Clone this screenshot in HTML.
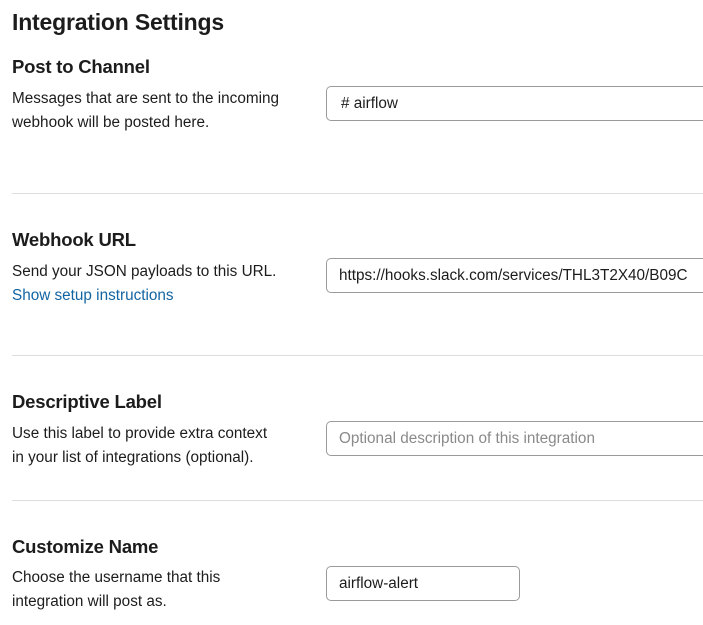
<!DOCTYPE html>
<html><head><meta charset="utf-8"><style>
*{margin:0;padding:0;box-sizing:border-box}
body{width:703px;height:625px;overflow:hidden;background:#fff;font-family:"Liberation Sans",sans-serif;color:#1d1c1d;position:relative}
h1{position:absolute;left:12px;top:9px;font-size:23px;font-weight:bold;letter-spacing:-0.2px}
h2{position:absolute;left:12px;font-size:18.5px;font-weight:bold;letter-spacing:-0.2px}
.d{position:absolute;left:12px;font-size:15.3px;line-height:24px;color:#1d1c1d;white-space:nowrap}
.in{position:absolute;left:326px;height:35px;border:1px solid #9a9a9b;border-radius:5px;border-right:none;border-top-right-radius:0;border-bottom-right-radius:0;font-size:15.3px;line-height:34px;padding-left:12px;white-space:nowrap;overflow:hidden}
.hr{position:absolute;left:12px;right:0;height:1px;background:#dddddd}
a{color:#1264a3;text-decoration:none}
</style></head><body>
<h1>Integration Settings</h1>
<h2 style="top:56px">Post to Channel</h2>
<div class="d" style="top:87px">Messages that are sent to the incoming<br>webhook will be posted here.</div>
<div class="in" style="top:86px;width:377px;padding-left:14px"># airflow</div>
<div class="hr" style="top:193px"></div>
<h2 style="top:229px">Webhook URL</h2>
<div class="d" style="top:260px">Send your JSON payloads to this URL.<br><a>Show setup instructions</a></div>
<div class="in" style="top:258px;width:377px">https://hooks.slack.com/services/THL3T2X40/B09C</div>
<div class="hr" style="top:355px"></div>
<h2 style="top:391px">Descriptive Label</h2>
<div class="d" style="top:422px">Use this label to provide extra context<br>in your list of integrations (optional).</div>
<div class="in" style="top:421px;width:377px;color:#8a8a8a">Optional description of this integration</div>
<div class="hr" style="top:500px"></div>
<h2 style="top:536px">Customize Name</h2>
<div class="d" style="top:566px">Choose the username that this<br>integration will post as.</div>
<div class="in" style="top:566px;width:194px;border-right:1px solid #9a9a9b;border-radius:5px">airflow-alert</div>
</body></html>
